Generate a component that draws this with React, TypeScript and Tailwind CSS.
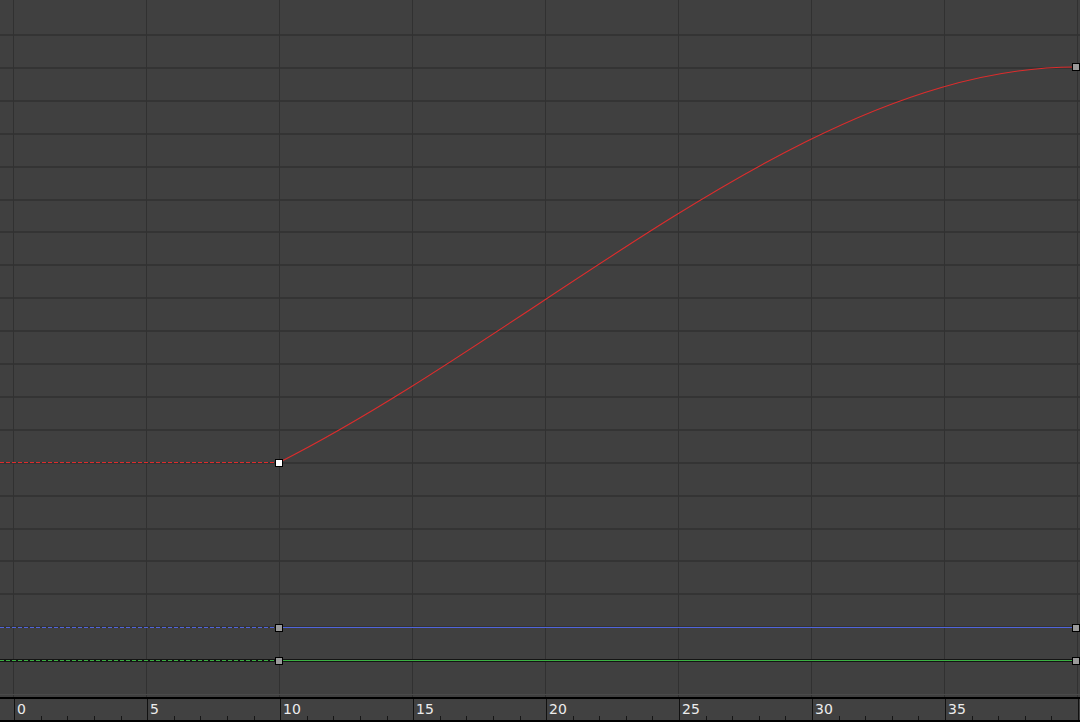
import React from 'react';

// frame -> x on the canvas, row -> y
const fx = (f: number) => 13 + 26.6 * f;
const ry = (k: number) => 35 + 32.9 * k;

const FRAMES = Array.from({ length: 41 }, (_, i) => i);
const MAJOR = FRAMES.filter(f => f % 5 === 0);
const ROWS = Array.from({ length: 20 }, (_, i) => i);

const RED = '#dd2c2c';
const BLUE = '#5065dc';
const GREEN = '#3cb043';

const Key: React.FC<{ x: number; y: number; selected?: boolean }> = ({ x, y, selected }) => (
  <rect
    x={Math.round(x) - 3.5}
    y={Math.round(y) - 3.5}
    width={7}
    height={7}
    fill={selected ? '#ffffff' : '#9a9a9a'}
    stroke="#000000"
    strokeWidth={1}
  />
);

export default function App() {
  const k0 = { x: fx(10), y: Math.round(ry(13)) - 0.5 };
  const k1 = { x: fx(40) - 1, y: Math.round(ry(1)) - 1 };
  const blueY = Math.round(ry(18)) + 0.5;
  const greenY = Math.round(ry(19)) + 0.5;

  return (
    <div className="w-[1080px] h-[722px] bg-[#404040] flex flex-col overflow-hidden select-none">
      {/* ── Curve canvas ── */}
      <svg width={1080} height={697} className="block shrink-0">
        {ROWS.map(k => (
          <rect key={k} x={0} y={Math.round(ry(k)) - 1} width={1080} height={2} fill="#343434" />
        ))}
        {MAJOR.map(f => (
          <rect key={f} x={Math.round(fx(f))} y={0} width={1} height={697} fill="#313131" />
        ))}
        <rect x={0} y={694} width={1080} height={1} fill="#4a4a4a" />

        {/* red curve */}
        <line x1={0} y1={k0.y} x2={k0.x} y2={k0.y}
          stroke={RED} strokeWidth={1} strokeDasharray="4 2" shapeRendering="crispEdges" />
        <path
          d={`M ${k0.x} ${k0.y} C 544 328, 810 ${k1.y}, ${k1.x} ${k1.y}`}
          fill="none" stroke={RED} strokeWidth={1.1}
        />

        {/* blue curve */}
        <line x1={0} y1={blueY} x2={k0.x} y2={blueY} stroke={BLUE} strokeWidth={1}
          strokeDasharray="4 2" shapeRendering="crispEdges" />
        <line x1={k0.x} y1={blueY} x2={1080} y2={blueY} stroke={BLUE} strokeWidth={1} shapeRendering="crispEdges" />

        {/* green curve */}
        <rect x={0} y={greenY - 1.5} width={1080} height={3} fill="#141414" />
        <line x1={0} y1={greenY} x2={k0.x} y2={greenY} stroke={GREEN} strokeWidth={1}
          strokeDasharray="4 2" shapeRendering="crispEdges" />
        <line x1={k0.x} y1={greenY} x2={1080} y2={greenY} stroke={GREEN} strokeWidth={1} shapeRendering="crispEdges" />

        <Key x={k0.x} y={k0.y} selected />
        <Key x={k1.x} y={k1.y} />
        <Key x={k0.x} y={blueY} />
        <Key x={k1.x} y={blueY} />
        <Key x={k0.x} y={greenY} />
        <Key x={k1.x} y={greenY} />
      </svg>

      {/* ── Time ruler ── */}
      <div className="h-[25px] shrink-0 border-t-2 border-b-2 border-black bg-[#414141]">
        <svg width={1080} height={21} className="block">
          {FRAMES.map(f => {
            const x = Math.round(14.3 + 26.59 * f) + 0.5;
            return f % 5 === 0 ? (
              <line key={f} x1={x} y1={0} x2={x} y2={21} stroke="#111111" strokeWidth={1} />
            ) : (
              <line key={f} x1={x} y1={17} x2={x} y2={21} stroke="#161616" strokeWidth={1} />
            );
          })}
          {MAJOR.filter(f => f < 40).map(f => (
            <text
              key={f}
              x={Math.round(14.3 + 26.59 * f) + 3}
              y={15}
              fill="#ececec"
              fontSize={14}
              fontFamily='"DejaVu Sans", sans-serif'
            >
              {f}
            </text>
          ))}
        </svg>
      </div>
    </div>
  );
}
